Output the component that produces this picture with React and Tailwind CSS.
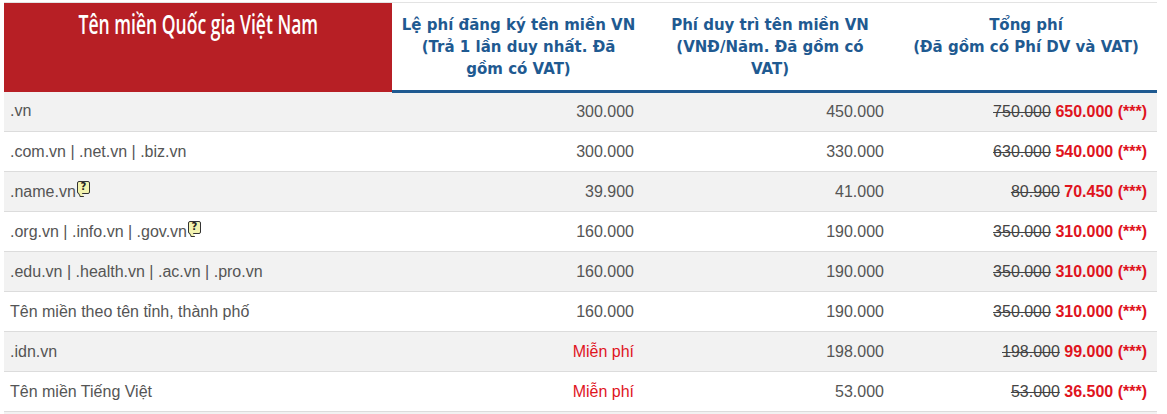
import React from "react";

const rows = [
  { name: ".vn", reg: "300.000", keep: "450.000", old: "750.000", now: "650.000" },
  { name: ".com.vn | .net.vn | .biz.vn", reg: "300.000", keep: "330.000", old: "630.000", now: "540.000" },
  { name: ".name.vn", help: true, reg: "39.900", keep: "41.000", old: "80.900", now: "70.450" },
  { name: ".org.vn | .info.vn | .gov.vn", help: true, reg: "160.000", keep: "190.000", old: "350.000", now: "310.000" },
  { name: ".edu.vn | .health.vn | .ac.vn | .pro.vn", reg: "160.000", keep: "190.000", old: "350.000", now: "310.000" },
  { name: "Tên miền theo tên tỉnh, thành phố", reg: "160.000", keep: "190.000", old: "350.000", now: "310.000" },
  { name: ".idn.vn", free: true, keep: "198.000", old: "198.000", now: "99.000" },
  { name: "Tên miền Tiếng Việt", free: true, keep: "53.000", old: "53.000", now: "36.500" },
  { name: "Tên miền cấp 3 (dưới tên miền cấp 2)", reg: "160.000", keep: "190.000", old: "350.000", now: "310.000" },
];

function Help() {
  return (
    <span className="relative inline-block align-top ml-[1px] mt-[1px] w-[13px] h-[13px]">
      <span className="absolute inset-0 bg-[#f3f3b0] border border-[#333] rounded-[2px] flex items-center justify-center text-[10px] leading-none font-bold text-[#222] [font-family:'DejaVu_Sans',sans-serif]">?</span>
      <span className="absolute left-[2px] -bottom-[3px] w-[4px] h-[4px] bg-[#f3f3b0] border-l border-b border-[#333] skew-x-[30deg]"></span>
    </span>
  );
}

export default function App() {
  const head = "text-[#1f5a91] font-bold text-[15px] leading-[22px] [font-family:'DejaVu_Sans',Verdana,sans-serif] align-top text-center pt-[11px] border-b-[3px] border-[#1f5a91] bg-white";
  return (
    <div className="bg-white w-[1167px] h-[414px] overflow-hidden pt-[2px] pl-[4px]">
      <table className="border-collapse w-[1153px] table-fixed [font-family:'Liberation_Sans',Arial,sans-serif] text-[16px]">
        <colgroup>
          <col className="w-[388px]" />
          <col className="w-[253px]" />
          <col className="w-[250px]" />
          <col className="w-[262px]" />
        </colgroup>
        <thead>
          <tr className="border-t border-[#e3e3e3]">
            <th className="bg-[#b71f25] text-white align-top font-semibold text-[27px] leading-[30px] pt-[6px] h-[89px] text-center [font-family:'Open_Sans','Liberation_Sans',sans-serif] whitespace-nowrap">
              <span className="inline-block scale-x-[0.65]">Tên miền Quốc gia Việt Nam</span>
            </th>
            <th className={head}>
              Lệ phí đăng ký tên miền VN<br />(Trả 1 lần duy nhất. Đã<br />gồm có VAT)
            </th>
            <th className={head}>
              Phí duy trì tên miền VN<br />(VNĐ/Năm. Đã gồm có<br />VAT)
            </th>
            <th className={head}>
              Tổng phí<br />(Đã gồm có Phí DV và VAT)
            </th>
          </tr>
        </thead>
        <tbody className="text-[#555]">
          {rows.map((r, i) => (
            <tr key={i} className={`h-[40px] border-b border-[#dcdcdc] ${i % 2 === 0 ? "bg-[#f2f2f2]" : "bg-white"}`}>
              <td className="pl-[6px] align-middle">
                {r.name}
                {r.help && <Help />}
              </td>
              <td className="text-right pr-[11px]">
                {r.free ? <span className="text-[#e0141e]">Miễn phí</span> : r.reg}
              </td>
              <td className="text-right pr-[11px]">{r.keep}</td>
              <td className="text-right pr-[10px]">
                <span className="line-through text-[#444]">{r.old}</span>{" "}
                <span className="text-[#e0141e] font-bold">{r.now} (***)</span>
              </td>
            </tr>
          ))}
        </tbody>
      </table>
    </div>
  );
}
